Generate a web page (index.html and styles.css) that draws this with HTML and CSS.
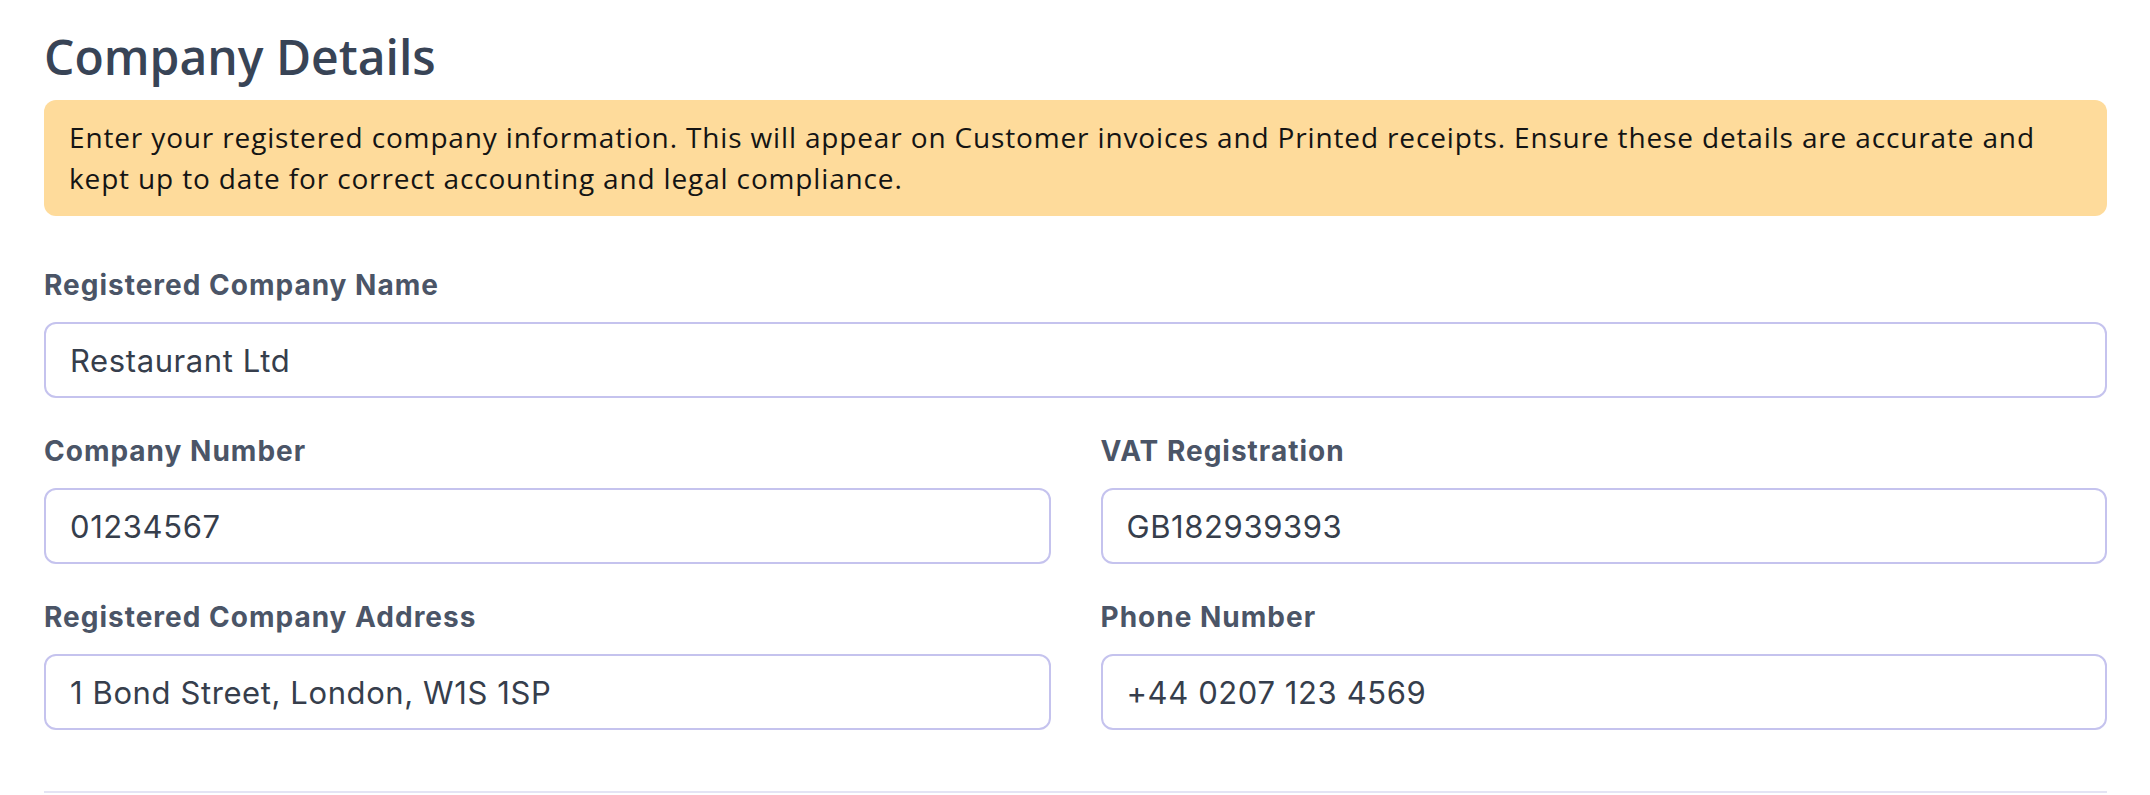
FILE: index.html
```html
<!DOCTYPE html>
<html lang="en">
<head>
<meta charset="utf-8">
<title>Company Details</title>
<link rel="stylesheet" href="styles.css">
</head>
<body>
<main class="page">
  <h1 class="title">Company Details</h1>
  <div class="alert">Enter your registered company information. This will appear on Customer invoices and Printed receipts. Ensure these details are accurate and kept up to date for correct accounting and legal compliance.</div>
  <form class="form">
    <div class="field">
      <label class="label" for="name">Registered Company Name</label>
      <input class="input" id="name" type="text" value="Restaurant Ltd">
    </div>
    <div class="row">
      <div class="field">
        <label class="label" for="number">Company Number</label>
        <input class="input" id="number" type="text" value="01234567">
      </div>
      <div class="field">
        <label class="label" for="vat">VAT Registration</label>
        <input class="input" id="vat" type="text" value="GB182939393">
      </div>
    </div>
    <div class="row">
      <div class="field">
        <label class="label" for="address">Registered Company Address</label>
        <input class="input" id="address" type="text" value="1 Bond Street, London, W1S 1SP">
      </div>
      <div class="field">
        <label class="label" for="phone">Phone Number</label>
        <input class="input" id="phone" type="text" value="+44 0207 123 4569">
      </div>
    </div>
  </form>
  <hr class="divider">
</main>
</body>
</html>
```
FILE: styles.css
```css
* { box-sizing: border-box; }
html, body { margin: 0; padding: 0; background: #ffffff; }
body { font-family: "Inter", "Open Sans", sans-serif; }
.page {
  width: 2150px;
  padding: 28px 43px 0 44px;
}
.title {
  margin: 0;
  font-family: "Open Sans", sans-serif;
  font-weight: 600;
  font-size: 48px;
  line-height: 58px;
  color: #384456;
}
.alert {
  margin-top: 14px;
  background: #fedb9b;
  border-radius: 12px;
  padding: 17px 25px;
  font-family: "Open Sans", sans-serif;
  font-size: 28px;
  letter-spacing: 0.85px;
  line-height: 41px;
  color: #141414;
}
.form {
  margin-top: 52px;
  display: flex;
  flex-direction: column;
  gap: 36px;
}
.row {
  display: grid;
  grid-template-columns: 1fr 1fr;
  column-gap: 50px;
}
.field {
  display: flex;
  flex-direction: column;
  gap: 20px;
}
.label {
  font-family: "Inter", sans-serif;
  font-weight: 700;
  font-size: 28px;
  letter-spacing: 1px;
  line-height: 34px;
  color: #4b5567;
}
.input {
  height: 76px;
  width: 100%;
  border: 2px solid #c5c3ee;
  border-radius: 12px;
  padding: 0 24px;
  font-family: "Inter", sans-serif;
  font-size: 31px;
  letter-spacing: 0.6px;
  color: #363e4c;
  background: #ffffff;
  outline: none;
}
.divider {
  margin: 61px 0 0 0;
  border: 0;
  border-top: 2px solid #e4e4f4;
}
```
